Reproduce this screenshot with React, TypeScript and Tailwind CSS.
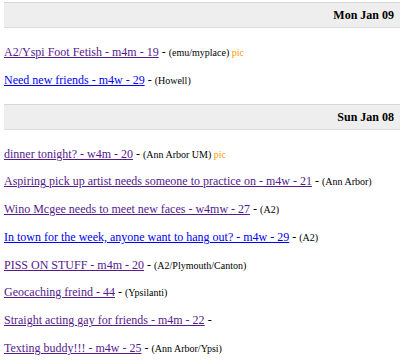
import React from "react";

type Row = { title: string; loc?: string; pic?: boolean; visited: boolean };

const mon: Row[] = [
  { title: "A2/Yspi Foot Fetish - m4m - 19", loc: "(emu/myplace)", pic: true, visited: true },
  { title: "Need new friends - m4w - 29", loc: "(Howell)", visited: false },
];

const sun: Row[] = [
  { title: "dinner tonight? - w4m - 20", loc: "(Ann Arbor UM)", pic: true, visited: true },
  { title: "Aspiring pick up artist needs someone to practice on - m4w - 21", loc: "(Ann Arbor)", visited: true },
  { title: "Wino Mcgee needs to meet new faces - w4mw - 27", loc: "(A2)", visited: true },
  { title: "In town for the week, anyone want to hang out? - m4w - 29", loc: "(A2)", visited: false },
  { title: "PISS ON STUFF - m4m - 20", loc: "(A2/Plymouth/Canton)", visited: true },
  { title: "Geocaching freind - 44", loc: "(Ypsilanti)", visited: true },
  { title: "Straight acting gay for friends - m4m - 22", visited: true },
  { title: "Texting buddy!!! - m4w - 25", loc: "(Ann Arbor/Ypsi)", visited: true },
];

function Header({ text }: { text: string }) {
  return (
    <div className="ml-[4px] h-[26px] flex items-center justify-end pr-[6px] bg-[#eeeeee] border-t border-b border-t-[#d6d6d6] border-b-[#dcdcdc] text-[12px] font-bold text-black">
      {text}
    </div>
  );
}

function RowItem({ r }: { r: Row }) {
  return (
    <div className="ml-[4px] h-[14px] leading-[14px] whitespace-nowrap text-[12px] text-black">
      <a
        href="#"
        className={
          r.visited
            ? "underline text-[#551a8b] decoration-[#551a8b]"
            : "underline text-[#0000ee] decoration-[#0000ee]"
        }
      >
        {r.title}
      </a>
      <span> - </span>
      {r.loc && <span className="text-[10px]">{r.loc}</span>}
      {r.pic && <span className="text-[10px] text-[#ff9900]"> pic</span>}
    </div>
  );
}

export default function App() {
  return (
    <div className="w-[400px] h-[360px] overflow-hidden bg-white pt-[2px] font-[family-name:'Liberation_Serif','Times_New_Roman',serif]">
      <Header text="Mon Jan 09" />
      <div className="flex flex-col gap-[13.5px] mt-[17px] mb-[17.5px]">
        {mon.map((r, i) => (
          <RowItem key={i} r={r} />
        ))}
      </div>
      <Header text="Sun Jan 08" />
      <div className="flex flex-col gap-[13.8px] mt-[16.5px]">
        {sun.map((r, i) => (
          <RowItem key={i} r={r} />
        ))}
      </div>
    </div>
  );
}
